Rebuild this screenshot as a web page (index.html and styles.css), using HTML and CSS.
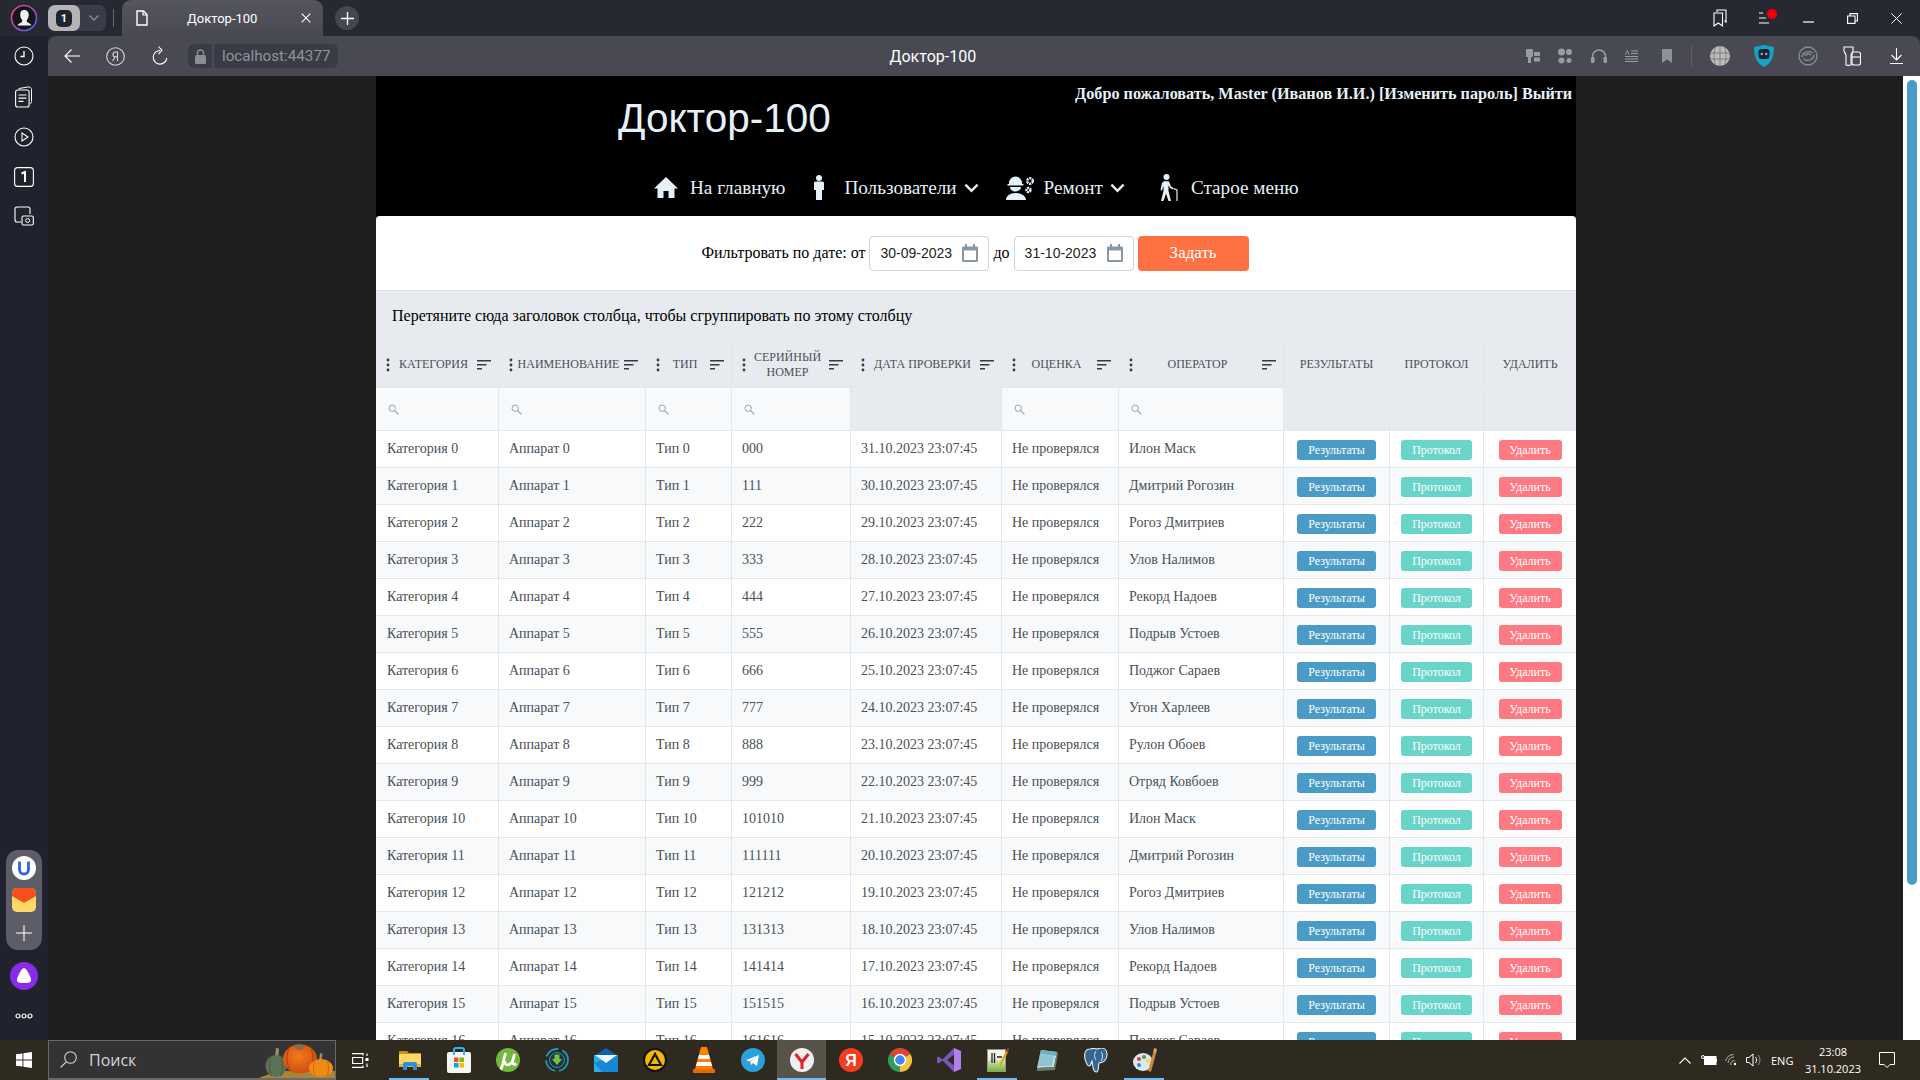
FILE: index.html
```html
<!DOCTYPE html>
<html lang="ru">
<head>
<meta charset="utf-8">
<title>Доктор-100</title>
<link rel="stylesheet" href="styles.css">
</head>
<body>
<svg class="defs" width="0" height="0">
  <defs>
    <symbol id="kebab" viewBox="0 0 4 14"><circle cx="2" cy="2" r="1.4"/><circle cx="2" cy="7" r="1.4"/><circle cx="2" cy="12" r="1.4"/></symbol>
    <symbol id="sort" viewBox="0 0 14 10"><path d="M0 0h14v1.6H0zM0 4h9.5v1.6H0zM0 8h5v1.6H0z"/></symbol>
    <symbol id="find" viewBox="0 0 11 11"><circle cx="4.2" cy="4.2" r="3.2" fill="none" stroke="currentColor"/><path d="M6.6 6.6L10.4 10.4" stroke="currentColor" stroke-width="1.3"/></symbol>
    <symbol id="cal" viewBox="0 0 16 18"><path d="M0 3.5a1 1 0 0 1 1-1h2V0h2v2.5h6V0h2v2.5h2a1 1 0 0 1 1 1V17a1 1 0 0 1-1 1H1a1 1 0 0 1-1-1zM2 6.500V16h12V6.500z"/></symbol>
    <symbol id="chev" viewBox="0 0 16 10"><path d="M1.500 1.500L8 8l6.500-6.500" fill="none" stroke="currentColor" stroke-width="2.600"/></symbol>
  </defs>
</svg>
<div class="screen">
  <header class="titlebar">
    <div class="avatar">
      <svg width="28" height="28" viewBox="0 0 28 28"><defs><linearGradient id="ring" x1="0" y1="0" x2="1" y2="1"><stop offset="0" stop-color="#ff3d78"/><stop offset="1" stop-color="#4a5cff"/></linearGradient></defs><circle cx="14" cy="14" r="12.500" fill="#15161c" stroke="url(#ring)" stroke-width="1.600"/><path d="M14 6c3.400 0 5 2.500 4.700 5.500-.2 2-1 3.500-2 4.500l.3 2 3.500 2c.6.500.7 1.200.7 1.500H7.800c0-.3.100-1 .7-1.500l3.500-2 .3-2c-1-1-1.800-2.500-2-4.500C10 8.500 11 6 14 6z" fill="#f1f1f1"/></svg>
    </div>
    <div class="tabcount">
      <span class="tabcount-on"><b>1</b></span>
      <svg width="12" height="8" viewBox="0 0 12 8"><path d="M1.500 1.500L6 6l4.500-4.500" fill="none" stroke="#8a8c95" stroke-width="1.300"/></svg>
    </div>
    <span class="bar-sep"></span>
    <div class="tab">
      <svg width="12" height="16" viewBox="0 0 12 16"><path d="M1 1h6.500L11 4.500V15H1z" fill="none" stroke="#fff" stroke-width="1.400"/><path d="M7 1v4h4" fill="none" stroke="#fff" stroke-width="1.200"/></svg>
      <span class="tab-title">Доктор-100</span>
      <svg width="10" height="10" viewBox="0 0 10 10"><path d="M.7.7l8.600 8.600M9.300.7L.7 9.300" stroke="#fff" stroke-width="1.100"/></svg>
    </div>
    <div class="newtab"><svg width="13" height="13" viewBox="0 0 13 13"><path d="M6.500 0v13M0 6.500h13" stroke="#fff" stroke-width="1.300"/></svg></div>
    <div class="window-btns">
      <span class="win-btn"><svg width="14" height="18" viewBox="0 0 14 18"><path d="M4 3V1h9v12l-1.500-1.200M1 4h8.500v13L5.300 14 1 17z" fill="none" stroke="#fff" stroke-width="1.100"/></svg></span>
      <span class="win-btn win-menu"><svg width="10" height="12" viewBox="0 0 10 12"><path d="M0 1h4M0 6h7M0 11h10" stroke="#fff" stroke-width="1.100"/></svg><i class="red-dot"></i></span>
      <span class="win-btn win-min"><svg width="11" height="2" viewBox="0 0 11 2"><path d="M0 1h11" stroke="#fff" stroke-width="1.200"/></svg></span>
      <span class="win-btn"><svg width="11" height="11" viewBox="0 0 11 11"><path d="M3 3V.6h7.400V8H8M.6 3h7.400v7.400H.6z" fill="none" stroke="#fff" stroke-width="1.100"/></svg></span>
      <span class="win-btn"><svg width="11" height="11" viewBox="0 0 11 11"><path d="M.4.4l10.200 10.200M10.600.4L.4 10.600" stroke="#fff" stroke-width="1"/></svg></span>
    </div>
  </header>

  <aside class="sidebar">
    <div class="side-top">
      <svg width="20" height="20" viewBox="0 0 20 20"><circle cx="10" cy="10" r="9" fill="none" stroke="#fff" stroke-width="1.100"/><path d="M10 5v5.500H6.500" fill="none" stroke="#fff" stroke-width="1.300"/></svg>
      <svg width="18" height="22" viewBox="0 0 18 22"><rect x=".6" y="4" width="13.500" height="17" rx="2" fill="none" stroke="#fff" stroke-width="1.100"/><path d="M4 3.500V2.500l9-1.500c2-.2 3.500.6 3.500 2.500v12c0 1.200-.6 2-1.500 2.500" fill="none" stroke="#fff"/><path d="M3.500 9h8M3.500 12.200h8M3.500 15.400h5" stroke="#fff" stroke-width="1.200"/></svg>
      <svg width="20" height="20" viewBox="0 0 20 20"><circle cx="10" cy="10" r="9" fill="none" stroke="#fff" stroke-width="1.100"/><path d="M8 6l6 4-6 4z" fill="none" stroke="#fff" stroke-width="1.100"/></svg>
      <svg width="20" height="20" viewBox="0 0 20 20"><rect x=".6" y=".6" width="18.800" height="18.800" rx="3" fill="none" stroke="#fff" stroke-width="1.100"/><path d="M7.500 6.500L11 5v10" fill="none" stroke="#fff" stroke-width="2"/></svg>
      <svg width="20" height="20" viewBox="0 0 20 20"><path d="M7 16H3a2 2 0 0 1-2-2V3a2 2 0 0 1 2-2h11a2 2 0 0 1 2 2v5" fill="none" stroke="#fff" stroke-width="1.100"/><rect x="8" y="10" width="11.300" height="9" rx="1.500" fill="#20232e" stroke="#fff" stroke-width="1.100"/><circle cx="13.700" cy="14.500" r="2" fill="none" stroke="#fff"/></svg>
    </div>
    <div class="side-bottom">
      <div class="side-group">
        <svg width="24" height="24" viewBox="0 0 24 24"><circle cx="12" cy="12" r="12" fill="#fff"/><path d="M7.500 5.500v8a4.500 4.500 0 0 0 9 0v-8" fill="none" stroke="#2f62e8" stroke-width="2.800"/></svg>
        <svg width="24" height="24" viewBox="0 0 24 24"><rect width="24" height="24" rx="5" fill="#ffd76a"/><path d="M0 5a5 5 0 0 1 5-5h14a5 5 0 0 1 5 5v3l-12 7L0 8z" fill="#f4511e"/></svg>
        <svg width="16" height="16" viewBox="0 0 16 16"><path d="M8 0v16M0 8h16" stroke="#fff" stroke-width="1.100"/></svg>
      </div>
      <svg class="alice" width="28" height="28" viewBox="0 0 28 28"><circle cx="14" cy="14" r="14" fill="#8a2be8"/><path d="M14 6c2.500 0 7 9 7 12 0 2.500-3 3-7 3s-7-.5-7-3c0-3 4.500-12 7-12z" fill="#fff"/></svg>
      <svg class="dots" width="18" height="6" viewBox="0 0 18 6"><g fill="none" stroke="#fff" stroke-width="1.200"><circle cx="3" cy="3" r="2"/><circle cx="9" cy="3" r="2"/><circle cx="15" cy="3" r="2"/></g></svg>
    </div>
  </aside>

  <nav class="toolbar">
    <div class="tool-left">
      <svg class="t-back" width="16" height="14" viewBox="0 0 16 14"><path d="M7.500.5L1 7l6.500 6.500M1 7h15" fill="none" stroke="#fff" stroke-width="1.100"/></svg>
      <svg class="t-ya" width="19" height="19" viewBox="0 0 19 19"><circle cx="9.500" cy="9.500" r="8.800" fill="none" stroke="#d8d8dc" stroke-width="1.100"/><path d="M11.500 14V5H9.400C7.800 5 7 6 7 7.400s.8 2.400 2.300 2.400h2.200M9 10l-2.300 4" fill="none" stroke="#d8d8dc" stroke-width="1.100"/></svg>
      <svg class="t-re" width="16" height="20" viewBox="0 0 16 20"><path d="M8 4.500a6.800 6.800 0 1 0 6.800 7.500" fill="none" stroke="#fff" stroke-width="1.100"/><path d="M6.500.5L10 4.300 6.500 8" fill="none" stroke="#fff" stroke-width="1.100"/></svg>
      <span class="lock-chip"><svg width="11" height="15" viewBox="0 0 11 15"><path d="M2.500 6V4a3 3 0 0 1 6 0v2" fill="none" stroke="#8a8d96" stroke-width="1.400"/><rect y="6" width="11" height="9" rx="1.500" fill="#8a8d96"/></svg></span>
      <span class="url-chip">localhost:44377</span>
    </div>
    <div class="page-title">Доктор-100</div>
    <div class="tool-right">
      <svg width="14" height="14" viewBox="0 0 14 14" fill="#9a9ca3"><rect width="7" height="8" rx="1"/><rect x="2" y="8" width="3" height="6"/><rect x="8" y="3" width="6" height="4"/><rect x="8" y="8.500" width="6" height="4"/></svg>
      <svg width="14" height="16" viewBox="0 0 14 16" fill="#9a9ca3"><circle cx="3.500" cy="4" r="3.500"/><circle cx="11" cy="4" r="3"/><circle cx="3.500" cy="12.500" r="3"/><circle cx="11" cy="12.500" r="2.500"/></svg>
      <svg width="16" height="14" viewBox="0 0 16 14"><path d="M1.500 11V7.500a6.500 6.500 0 0 1 13 0V11" fill="none" stroke="#9a9ca3" stroke-width="1.500"/><rect y="8" width="3.500" height="6" rx="1" fill="#9a9ca3"/><rect x="12.500" y="8" width="3.500" height="6" rx="1" fill="#9a9ca3"/></svg>
      <svg width="13" height="13" viewBox="0 0 13 13"><path d="M6 1h7M6 3.500h7M0 6.500h13M0 9h13M0 11.500h13" stroke="#9a9ca3"/><path d="M.5 4.500L2.300.5l1.800 4" fill="none" stroke="#9a9ca3"/></svg>
      <svg width="10" height="14" viewBox="0 0 10 14"><path d="M0 0h10v14L5 10.500 0 14z" fill="#8f9198"/></svg>
      <span class="tool-sep"></span>
      <svg width="20" height="20" viewBox="0 0 20 20"><circle cx="10" cy="10" r="10" fill="#bcbcbc"/><path d="M0 7h20M0 13h20M10 0v20M5.500 1.500c-2 5-2 12 0 17M14.500 1.500c2 5 2 12 0 17" fill="none" stroke="#6d6d6d" stroke-width=".8"/></svg>
      <svg width="20" height="22" viewBox="0 0 20 22"><path d="M0 2l10-2 10 2c0 9-2 16-10 20C2 18 0 11 0 2z" fill="#14a3c7"/><rect x="4.500" y="4" width="11" height="10" rx="3" fill="#1b2430"/><circle cx="7.800" cy="9" r="1.200" fill="#7fb7c9"/><circle cx="12.200" cy="9" r="1.200" fill="#7fb7c9"/></svg>
      <svg width="20" height="20" viewBox="0 0 20 20" fill="none" stroke="#8c8e95" stroke-width="1.300"><circle cx="10" cy="10" r="9"/><path d="M4 11c1-5 7-7 11-4M16 9c-1 5-7 7-10 4M7 10c1-2 4-3 6-1"/></svg>
      <svg width="18" height="20" viewBox="0 0 18 20" fill="none" stroke="#fff" stroke-width="1.100"><path d="M3 19V9L1 5V1h9v4L8 9v10c-2 .5-3.500.5-5 0z"/><rect x="9" y="6" width="8.500" height="13" rx="2"/><path d="M9 11h8.500"/></svg>
      <svg width="13" height="16" viewBox="0 0 13 16"><path d="M6.500 0v12M1.500 7l5 5 5-5M0 15.500h13" fill="none" stroke="#fff" stroke-width="1.100"/></svg>
    </div>
  </nav>

  <main class="viewport">
    <div class="page">
      <section class="site-head">
        <div class="head-top">
          <h1 class="brand">Доктор-100</h1>
          <p class="welcome">Добро пожаловать, Master (Иванов И.И.) [Изменить пароль] Выйти</p>
        </div>
        <ul class="menu">
          <li class="m-home"><svg width="24" height="21" viewBox="0 0 24 21"><path d="M12 0L0 11.500h3.500V21h6v-7h5v7h6v-9.500H24z" fill="#e6f0f8"/></svg>На главную</li>
          <li class="m-users"><svg width="12" height="25" viewBox="0 0 12 25"><circle cx="6" cy="3" r="3" fill="#e6f0f8"/><path d="M1 8a1.500 1.500 0 0 1 1.500-1.500h7A1.500 1.500 0 0 1 11 8v7H9v10H3V15H1z" fill="#e6f0f8"/></svg>Пользователи<svg class="chev" width="15" height="10"><use href="#chev"/></svg></li>
          <li class="m-rep"><svg width="29" height="24" viewBox="0 0 29 24"><path d="M3 7a6.500 6.500 0 0 1 13 0v1h1.500v1.500h-16V8H3zM4 11h11c0 2.500-2.500 4.500-5.500 4.500S4 13.500 4 11zM0 24c0-4 4-7 9.500-7S20 20 20 24z" fill="#e6f0f8"/><g fill="none" stroke="#e6f0f8" stroke-width="2.400"><circle cx="24" cy="5" r="2.800" stroke-dasharray="2.200 .8"/><circle cx="22.500" cy="14" r="2" stroke-dasharray="1.800 .6"/></g></svg>Ремонт<svg class="chev" width="15" height="10"><use href="#chev"/></svg></li>
          <li class="m-old"><svg width="20" height="27" viewBox="0 0 20 27"><circle cx="8.500" cy="3" r="3" fill="#e6f0f8"/><path d="M6.500 7L4 9l-1.500 7 1.500.5 1.500-5V17L3 27h2.500L8 19.500 10.500 27H13l-2.500-10v-6l1.500 3 3 1.500.5-1.500-2.500-1.500-2-5z" fill="#e6f0f8"/><path d="M15.500 14.500L19 16v11" fill="none" stroke="#e6f0f8" stroke-width="1.200"/></svg>Старое меню</li>
        </ul>
      </section>

      <section class="filter-card">
        <span>Фильтровать по дате: от</span>
        <span class="date-field"><span>30-09-2023</span><svg class="cal" width="16" height="18"><use href="#cal"/></svg></span>
        <span>до</span>
        <span class="date-field"><span>31-10-2023</span><svg class="cal" width="16" height="18"><use href="#cal"/></svg></span>
        <button class="apply" type="button">Задать</button>
      </section>

      <section class="group-panel">Перетяните сюда заголовок столбца, чтобы сгруппировать по этому столбцу</section>

      <table class="grid">
        <colgroup>
          <col class="c1"><col class="c2"><col class="c3"><col class="c4"><col class="c5"><col class="c6"><col class="c7"><col class="c8"><col class="c9"><col class="c10">
        </colgroup>
        <thead>
          <tr class="head-row">
            <th><div class="hd"><svg class="keb" width="4" height="14"><use href="#kebab"/></svg><span>Категория</span><svg class="srt" width="14" height="10"><use href="#sort"/></svg></div></th>
            <th><div class="hd"><svg class="keb" width="4" height="14"><use href="#kebab"/></svg><span>Наименование</span><svg class="srt" width="14" height="10"><use href="#sort"/></svg></div></th>
            <th><div class="hd"><svg class="keb" width="4" height="14"><use href="#kebab"/></svg><span>Тип</span><svg class="srt" width="14" height="10"><use href="#sort"/></svg></div></th>
            <th><div class="hd"><svg class="keb" width="4" height="14"><use href="#kebab"/></svg><span>Серийный номер</span><svg class="srt" width="14" height="10"><use href="#sort"/></svg></div></th>
            <th><div class="hd"><svg class="keb" width="4" height="14"><use href="#kebab"/></svg><span>Дата проверки</span><svg class="srt" width="14" height="10"><use href="#sort"/></svg></div></th>
            <th><div class="hd"><svg class="keb" width="4" height="14"><use href="#kebab"/></svg><span>Оценка</span><svg class="srt" width="14" height="10"><use href="#sort"/></svg></div></th>
            <th><div class="hd"><svg class="keb" width="4" height="14"><use href="#kebab"/></svg><span>Оператор</span><svg class="srt" width="14" height="10"><use href="#sort"/></svg></div></th>
            <th class="plain">Результаты</th>
            <th class="plain">Протокол</th>
            <th class="plain">Удалить</th>
          </tr>
          <tr class="filter-row">
            <td><svg class="fnd" width="11" height="11"><use href="#find"/></svg></td>
            <td><svg class="fnd" width="11" height="11"><use href="#find"/></svg></td>
            <td><svg class="fnd" width="11" height="11"><use href="#find"/></svg></td>
            <td><svg class="fnd" width="11" height="11"><use href="#find"/></svg></td>
            <td class="nofilter"></td>
            <td><svg class="fnd" width="11" height="11"><use href="#find"/></svg></td>
            <td><svg class="fnd" width="11" height="11"><use href="#find"/></svg></td>
            <td class="nofilter"></td>
            <td class="nofilter"></td>
            <td class="nofilter"></td>
          </tr>
        </thead>
        <tbody>
          <tr><td>Категория 0</td><td>Аппарат 0</td><td>Тип 0</td><td>000</td><td>31.10.2023 23:07:45</td><td>Не проверялся</td><td>Илон Маск</td><td class="act"><a class="btn b-res">Результаты</a></td><td class="act"><a class="btn b-pro">Протокол</a></td><td class="act"><a class="btn b-del">Удалить</a></td></tr>
          <tr><td>Категория 1</td><td>Аппарат 1</td><td>Тип 1</td><td>111</td><td>30.10.2023 23:07:45</td><td>Не проверялся</td><td>Дмитрий Рогозин</td><td class="act"><a class="btn b-res">Результаты</a></td><td class="act"><a class="btn b-pro">Протокол</a></td><td class="act"><a class="btn b-del">Удалить</a></td></tr>
          <tr><td>Категория 2</td><td>Аппарат 2</td><td>Тип 2</td><td>222</td><td>29.10.2023 23:07:45</td><td>Не проверялся</td><td>Рогоз Дмитриев</td><td class="act"><a class="btn b-res">Результаты</a></td><td class="act"><a class="btn b-pro">Протокол</a></td><td class="act"><a class="btn b-del">Удалить</a></td></tr>
          <tr><td>Категория 3</td><td>Аппарат 3</td><td>Тип 3</td><td>333</td><td>28.10.2023 23:07:45</td><td>Не проверялся</td><td>Улов Налимов</td><td class="act"><a class="btn b-res">Результаты</a></td><td class="act"><a class="btn b-pro">Протокол</a></td><td class="act"><a class="btn b-del">Удалить</a></td></tr>
          <tr><td>Категория 4</td><td>Аппарат 4</td><td>Тип 4</td><td>444</td><td>27.10.2023 23:07:45</td><td>Не проверялся</td><td>Рекорд Надоев</td><td class="act"><a class="btn b-res">Результаты</a></td><td class="act"><a class="btn b-pro">Протокол</a></td><td class="act"><a class="btn b-del">Удалить</a></td></tr>
          <tr><td>Категория 5</td><td>Аппарат 5</td><td>Тип 5</td><td>555</td><td>26.10.2023 23:07:45</td><td>Не проверялся</td><td>Подрыв Устоев</td><td class="act"><a class="btn b-res">Результаты</a></td><td class="act"><a class="btn b-pro">Протокол</a></td><td class="act"><a class="btn b-del">Удалить</a></td></tr>
          <tr><td>Категория 6</td><td>Аппарат 6</td><td>Тип 6</td><td>666</td><td>25.10.2023 23:07:45</td><td>Не проверялся</td><td>Поджог Сараев</td><td class="act"><a class="btn b-res">Результаты</a></td><td class="act"><a class="btn b-pro">Протокол</a></td><td class="act"><a class="btn b-del">Удалить</a></td></tr>
          <tr><td>Категория 7</td><td>Аппарат 7</td><td>Тип 7</td><td>777</td><td>24.10.2023 23:07:45</td><td>Не проверялся</td><td>Угон Харлеев</td><td class="act"><a class="btn b-res">Результаты</a></td><td class="act"><a class="btn b-pro">Протокол</a></td><td class="act"><a class="btn b-del">Удалить</a></td></tr>
          <tr><td>Категория 8</td><td>Аппарат 8</td><td>Тип 8</td><td>888</td><td>23.10.2023 23:07:45</td><td>Не проверялся</td><td>Рулон Обоев</td><td class="act"><a class="btn b-res">Результаты</a></td><td class="act"><a class="btn b-pro">Протокол</a></td><td class="act"><a class="btn b-del">Удалить</a></td></tr>
          <tr><td>Категория 9</td><td>Аппарат 9</td><td>Тип 9</td><td>999</td><td>22.10.2023 23:07:45</td><td>Не проверялся</td><td>Отряд Ковбоев</td><td class="act"><a class="btn b-res">Результаты</a></td><td class="act"><a class="btn b-pro">Протокол</a></td><td class="act"><a class="btn b-del">Удалить</a></td></tr>
          <tr><td>Категория 10</td><td>Аппарат 10</td><td>Тип 10</td><td>101010</td><td>21.10.2023 23:07:45</td><td>Не проверялся</td><td>Илон Маск</td><td class="act"><a class="btn b-res">Результаты</a></td><td class="act"><a class="btn b-pro">Протокол</a></td><td class="act"><a class="btn b-del">Удалить</a></td></tr>
          <tr><td>Категория 11</td><td>Аппарат 11</td><td>Тип 11</td><td>111111</td><td>20.10.2023 23:07:45</td><td>Не проверялся</td><td>Дмитрий Рогозин</td><td class="act"><a class="btn b-res">Результаты</a></td><td class="act"><a class="btn b-pro">Протокол</a></td><td class="act"><a class="btn b-del">Удалить</a></td></tr>
          <tr><td>Категория 12</td><td>Аппарат 12</td><td>Тип 12</td><td>121212</td><td>19.10.2023 23:07:45</td><td>Не проверялся</td><td>Рогоз Дмитриев</td><td class="act"><a class="btn b-res">Результаты</a></td><td class="act"><a class="btn b-pro">Протокол</a></td><td class="act"><a class="btn b-del">Удалить</a></td></tr>
          <tr><td>Категория 13</td><td>Аппарат 13</td><td>Тип 13</td><td>131313</td><td>18.10.2023 23:07:45</td><td>Не проверялся</td><td>Улов Налимов</td><td class="act"><a class="btn b-res">Результаты</a></td><td class="act"><a class="btn b-pro">Протокол</a></td><td class="act"><a class="btn b-del">Удалить</a></td></tr>
          <tr><td>Категория 14</td><td>Аппарат 14</td><td>Тип 14</td><td>141414</td><td>17.10.2023 23:07:45</td><td>Не проверялся</td><td>Рекорд Надоев</td><td class="act"><a class="btn b-res">Результаты</a></td><td class="act"><a class="btn b-pro">Протокол</a></td><td class="act"><a class="btn b-del">Удалить</a></td></tr>
          <tr><td>Категория 15</td><td>Аппарат 15</td><td>Тип 15</td><td>151515</td><td>16.10.2023 23:07:45</td><td>Не проверялся</td><td>Подрыв Устоев</td><td class="act"><a class="btn b-res">Результаты</a></td><td class="act"><a class="btn b-pro">Протокол</a></td><td class="act"><a class="btn b-del">Удалить</a></td></tr>
          <tr><td>Категория 16</td><td>Аппарат 16</td><td>Тип 16</td><td>161616</td><td>15.10.2023 23:07:45</td><td>Не проверялся</td><td>Поджог Сараев</td><td class="act"><a class="btn b-res">Результаты</a></td><td class="act"><a class="btn b-pro">Протокол</a></td><td class="act"><a class="btn b-del">Удалить</a></td></tr>
        </tbody>
      </table>
    </div>
    <div class="scrollbar"><div class="thumb"></div></div>
  </main>

  <footer class="taskbar">
    <div class="start"><svg width="16" height="16" viewBox="0 0 16 16" fill="#fff"><path d="M0 2.300L6.500 1.400v6.200H0zM7.400 1.300L16 0v7.600H7.400zM0 8.400h6.500v6.200L0 13.700zM7.400 8.400H16V16l-8.600-1.300z"/></svg></div>
    <div class="search">
      <svg width="17" height="17" viewBox="0 0 17 17"><circle cx="10.500" cy="6.500" r="5.800" fill="none" stroke="#d5d5d5" stroke-width="1.100"/><path d="M6.500 10.700L.6 16.500" stroke="#d5d5d5" stroke-width="1.100"/></svg>
      <span class="search-text">Поиск</span>
      <svg class="pumpkins" width="76" height="38" viewBox="0 0 76 38"><defs><radialGradient id="pk" cx=".45" cy=".4" r=".7"><stop offset="0" stop-color="#f47a1c"/><stop offset="1" stop-color="#c9470b"/></radialGradient></defs><path d="M0 38l18-7h58v7z" fill="#a8843d"/><path d="M16 16l1-8 3 .5-.5 8z" fill="#9c8a70"/><ellipse cx="17" cy="26" rx="10.500" ry="11" fill="#5b7257"/><path d="M12 16c-2 6-2 14 0 20M22 16c2 6 2 14 0 20" fill="none" stroke="#465a44"/><ellipse cx="41" cy="19" rx="17" ry="14.500" fill="url(#pk)"/><path d="M35 5c4-1.500 8-1 10 1s-2 5-6 4c-2-.5-4-3-4-5z" fill="#8a6a4a"/><path d="M31 6c-4 7-4 19 1 26M51 6c4 7 4 19-1 26" fill="none" stroke="#b03f08"/><path d="M60 21l1-8 2.500.5-1 8z" fill="#a08a6c"/><ellipse cx="62" cy="28" rx="12" ry="9" fill="#ee8a18"/><path d="M56 20c-2 5-2 11 0 16M68 20c2 5 2 11 0 16" fill="none" stroke="#c96f10"/></svg>
    </div>
    <div class="task-icons">
      <span class="slot"><svg width="17" height="15" viewBox="0 0 17 15" fill="none" stroke="#fff" stroke-width="1.200"><path d="M0 .6h11v2M0 14.400h11v-2M.6 4.500h10v6H.6z"/><rect x="13.500" y="5" width="3" height="3" fill="#fff" stroke="none"/><path d="M15 .5v2.500M15 10.500v3.500"/></svg></span>
      <span class="slot on"><svg width="22" height="19" viewBox="0 0 22 19"><path d="M0 0h8l2 2h12v4H0z" fill="#c98f1c"/><rect y="3" width="22" height="13" rx="1" fill="#ffd766"/><rect y="13" width="22" height="3" fill="#e6b140"/><path d="M4 19v-6a2 2 0 0 1 2-2h10a2 2 0 0 1 2 2v6h-4v-4H8v4z" fill="#2f8fd8"/></svg></span>
      <span class="slot"><svg width="24" height="26" viewBox="0 0 24 26"><rect y="5" width="24" height="21" rx="2" fill="#f5f5f5"/><path d="M7 8V3A2 2 0 0 1 9 1h6a2 2 0 0 1 2 2v5" fill="none" stroke="#29b6f6" stroke-width="2"/><rect x="7" y="10.500" width="4.500" height="4.500" fill="#f25022"/><rect x="12.500" y="10.500" width="4.500" height="4.500" fill="#7fba00"/><rect x="7" y="16" width="4.500" height="4.500" fill="#00a4ef"/><rect x="12.500" y="16" width="4.500" height="4.500" fill="#ffb900"/></svg></span>
      <span class="slot"><svg width="24" height="24" viewBox="0 0 24 24"><circle cx="12" cy="12" r="12" fill="#76b83f"/><path d="M9.500 5L6.500 17c-.5 2-1 3.500-2 4.500M9 13c-.5 3 1.500 4.500 4 3.500s3.500-2.500 4-4.500l1.500-6M16.500 12c-.5 3 .5 5 4 4" fill="none" stroke="#fff" stroke-width="2.800"/></svg></span>
      <span class="slot"><svg width="24" height="24" viewBox="0 0 24 24"><circle cx="12" cy="12" r="11" fill="none" stroke="#1c9bc4" stroke-width="1.800" stroke-dasharray="15 4"/><circle cx="12" cy="12" r="7.500" fill="#1d3a3a" stroke="#1c9bc4"/><path d="M9.500 6.500h5V11H17l-5 6-5-6h2.500z" fill="#7ec142"/></svg></span>
      <span class="slot"><svg width="24" height="24" viewBox="0 0 24 24"><path d="M12 0l12 8H0z" fill="#0a62b0"/><path d="M0 7h24v17H0z" fill="#29aee8"/><path d="M0 15l24-8v17H8z" fill="#1787d6"/><path d="M1 7h22l-11 8z" fill="#eef8fd"/></svg></span>
      <span class="slot"><svg width="24" height="24" viewBox="0 0 24 24"><circle cx="12" cy="12" r="12" fill="#111"/><circle cx="12" cy="12" r="10" fill="#f5b800"/><path d="M12 6l6 11H6z" fill="none" stroke="#111" stroke-width="2.200"/></svg></span>
      <span class="slot"><svg width="22" height="26" viewBox="0 0 22 26"><path d="M8 0h6l6 22H2z" fill="#ff7f00"/><path d="M6 8h10l1 4H5zM4 15h14l1 4H3z" fill="#fff"/><rect y="22" width="22" height="4" rx="1" fill="#e86a00"/></svg></span>
      <span class="slot"><svg width="24" height="24" viewBox="0 0 24 24"><circle cx="12" cy="12" r="12" fill="#2aa1da"/><path d="M5 12l13-5-2 11-4-3-2 2-.5-3.500L16 9l-7.500 4.500z" fill="#fff"/></svg></span>
      <span class="slot on active"><svg width="24" height="24" viewBox="0 0 24 24"><circle cx="12" cy="12" r="12" fill="#f2f0ee"/><path d="M5.500 6L12 14l6.500-8M12 14v7" fill="none" stroke="#e0202c" stroke-width="3"/></svg></span>
      <span class="slot"><svg width="24" height="24" viewBox="0 0 24 24"><circle cx="12" cy="12" r="12" fill="#f53c1f"/><text class="ya-glyph" x="12" y="18" text-anchor="middle">Я</text></svg></span>
      <span class="slot"><svg width="24" height="24" viewBox="0 0 24 24"><path d="M12 12L1.600 6A12 12 0 0 1 22.400 6z" fill="#db4437"/><path d="M12 12L22.400 6A12 12 0 0 1 12 24z" fill="#f5c33b"/><path d="M12 12L12 24A12 12 0 0 1 1.600 6z" fill="#2f9e52"/><circle cx="12" cy="12" r="5.500" fill="#4285f4" stroke="#fff" stroke-width="1.500"/></svg></span>
      <span class="slot"><svg width="24" height="24" viewBox="0 0 24 24"><path d="M17 0l7 3v18l-7 3z" fill="#b180ea"/><path d="M17 0L5.500 11.500l-4-3L0 9.500v5l1.500 1 4-3L17 24v-6.500L10 12l7-5.500z" fill="#7a55bd"/></svg></span>
      <span class="slot on"><svg width="22" height="24" viewBox="0 0 22 24"><defs><linearGradient id="npp" x1="0" y1="0" x2="0" y2="1"><stop offset=".35" stop-color="#f0f3e6"/><stop offset="1" stop-color="#6fb32e"/></linearGradient></defs><rect x=".5" y="1.500" width="18" height="22" fill="url(#npp)" stroke="#8f9a80"/><path d="M5 5v10M7.500 5v10M10 9h5" stroke="#222" stroke-width="1.300"/><path d="M12 17L19 3l2 1-7 14z" fill="#e8a020"/><path d="M19.500 2L21 0l1 1-1 3z" fill="#d33"/></svg></span>
      <span class="slot"><svg width="24" height="22" viewBox="0 0 24 22"><path d="M6 1l16 2-3 15-17 1z" fill="#bfe0e8"/><path d="M6 1l16 2-.8 4L5 5z" fill="#6fb1c4"/><path d="M2 19l17-1 3-15 1 2-3 16-18 1z" fill="#6f7d5a"/><path d="M5 5l14 2-2 10H3z" fill="#8fc5d3"/></svg></span>
      <span class="slot"><svg width="24" height="25" viewBox="0 0 24 25"><path d="M6 1C1 1 0 6 1 11c1 3 2 7 4 7s2-3 3-5c1 3 0 10 4 11 3 .5 2-6 3-9 3 0 8-2 8-9 0-4-3-6-6-6-2 0-3 1-4 1-2-.5-4-1-7 0z" fill="#336791" stroke="#e8eef2" stroke-width="1.100"/><path d="M12 3c-2 3-2 6 0 9M17 4c2 2 2 6 0 9" fill="none" stroke="#e8eef2"/></svg></span>
      <span class="slot on"><svg width="24" height="26" viewBox="0 0 24 26"><ellipse cx="10" cy="15" rx="10" ry="9" fill="#dfe8ee"/><circle cx="6" cy="12" r="2" fill="#e53935"/><circle cx="11" cy="10" r="2" fill="#43a047"/><circle cx="15" cy="14" r="2" fill="#fdd835"/><circle cx="6" cy="18" r="2" fill="#1e88e5"/><path d="M15 24L20 6l3 .8-5 18z" fill="#c58a3d"/><path d="M20 6l1-5 3 1-1 5z" fill="#d9a066"/></svg></span>
    </div>
    <div class="tray">
      <svg class="tr-chev" width="12" height="7" viewBox="0 0 12 7"><path d="M.5 6.500L6 1l5.500 5.500" fill="none" stroke="#fff" stroke-width="1.100"/></svg>
      <svg class="tr-bat" width="16" height="12" viewBox="0 0 16 12"><rect x="3.500" y="2.500" width="11.500" height="8" fill="#fff" stroke="#fff"/><circle cx="2" cy="3" r="1.500" fill="none" stroke="#fff"/><rect x="15" y="5" width="1" height="3" fill="#fff"/></svg>
      <svg class="tr-wifi" width="14" height="12" viewBox="0 0 14 12" fill="none" stroke="#b5b5b5"><path d="M.5 7a9 9 0 0 1 8-6.500M3 9a6 6 0 0 1 6-6M6 11a3 3 0 0 1 4-4"/><circle cx="10" cy="10" r="1.200" fill="#fff" stroke="none"/></svg>
      <svg class="tr-vol" width="16" height="14" viewBox="0 0 16 14" fill="none" stroke="#fff"><path d="M.5 4.500h2.500L7 1v12L3 9.500H.5z"/><path d="M9.500 4c1.500 2 1.500 4 0 6"/><path d="M12 2c2.500 3 2.500 7 0 10" stroke="#999"/></svg>
      <span class="lang">ENG</span>
      <div class="clock"><span>23:08</span><span>31.10.2023</span></div>
      <svg class="notif" width="16" height="16" viewBox="0 0 16 16"><path d="M.5.500h15v12H11l-3 3-3-3H.5z" fill="none" stroke="#fff"/></svg>
    </div>
  </footer>
</div>
</body>
</html>
```

FILE: styles.css
```css
* { box-sizing: border-box; }
html, body { margin: 0; height: 100%; overflow: hidden; }
body { font-family: "Liberation Serif", serif; background: #1e1e1e; }
.defs { display: block; height: 0; }

.screen {
  display: grid;
  grid-template-columns: 48px 1fr;
  grid-template-rows: 36px 40px 964px 40px;
  width: 1920px;
  height: 1080px;
  background: #262832;
}

/* title bar */
.titlebar {
  grid-column: 1 / 3;
  display: flex;
  align-items: center;
  background: #262832;
  padding-left: 10px;
}
.avatar { width: 28px; height: 28px; margin-right: 10px; }
.tabcount {
  display: flex;
  align-items: center;
  width: 58px;
  height: 26px;
  border-radius: 7px;
  background: #3a3c47;
  color: #fff;
}
.tabcount svg { margin-left: 8px; }
.tabcount-on {
  display: flex;
  align-items: center;
  justify-content: center;
  width: 32px;
  height: 26px;
  border-radius: 7px;
  background: #b4b4b6;
}
.tabcount-on b {
  display: block;
  width: 16px;
  height: 17px;
  border-radius: 5px;
  background: #22242d;
  font: 700 11px/17px "Roboto", sans-serif;
  text-align: center;
}
.bar-sep { width: 1px; height: 18px; margin: 0 8px 0 7px; background: #64656d; }
.tab {
  display: flex;
  align-items: center;
  width: 201px;
  height: 36px;
  padding: 0 12px 0 14px;
  border-radius: 9px 9px 0 0;
  background: linear-gradient(#55555f, #484953);
  color: #fff;
}
.tab-title {
  flex: 1;
  margin-left: 39px;
  font: 13px "Roboto", sans-serif;
}
.newtab {
  display: flex;
  align-items: center;
  justify-content: center;
  width: 24px;
  height: 24px;
  margin-left: 12px;
  border-radius: 50%;
  background: #454650;
}
.window-btns { display: flex; margin-left: auto; padding-right: 2px; }
.win-btn {
  position: relative;
  display: flex;
  align-items: center;
  justify-content: center;
  width: 44px;
  height: 36px;
}
.win-min svg { margin-top: 8px; }
.win-menu svg { margin-top: -1px; }
.red-dot {
  position: absolute;
  left: 25px;
  top: 9px;
  width: 10px;
  height: 10px;
  border-radius: 50%;
  background: #f40000;
}

/* sidebar */
.sidebar {
  grid-column: 1;
  grid-row: 2 / 4;
  display: flex;
  flex-direction: column;
  justify-content: space-between;
  background: #20232e;
}
.side-top {
  display: flex;
  flex-direction: column;
  align-items: center;
  gap: 19.5px;
  padding-top: 10px;
}
.side-bottom {
  display: flex;
  flex-direction: column;
  align-items: center;
  padding-bottom: 21px;
}
.side-group {
  display: flex;
  flex-direction: column;
  align-items: center;
  gap: 8px;
  width: 36px;
  height: 100px;
  padding-top: 6px;
  border-radius: 12px;
  background: #5c5d66;
}
.side-group svg:last-child { margin-top: 5px; }
.alice { margin-top: 12px; }
.dots { margin-top: 23px; }

/* address bar */
.toolbar {
  position: relative;
  display: flex;
  align-items: center;
  border-radius: 8px 8px 0 0;
  background: #484953;
}
.tool-left { display: flex; align-items: center; }
.t-back { margin-left: 16px; }
.t-ya { margin-left: 26px; }
.t-re { margin-left: 27px; }
.lock-chip {
  display: flex;
  align-items: center;
  justify-content: center;
  width: 24px;
  height: 24px;
  margin-left: 20px;
  border-radius: 6px 3px 3px 6px;
  background: #393b45;
}
.url-chip {
  height: 24px;
  margin-left: 2px;
  padding: 0 8px;
  border-radius: 3px 6px 6px 3px;
  background: #393b45;
  color: #92949b;
  font: 15.2px/24px "Roboto", sans-serif;
}
.page-title {
  margin-left: 551px;
  color: #fff;
  font: 16px "Roboto", sans-serif;
}
.tool-right {
  display: grid;
  grid-template-columns: 32px 32px 36px 28px 44px 9px 44px 44px 44px 44px 44px;
  align-items: center;
  justify-items: center;
  margin-left: auto;
  padding-right: 2px;
}
.tool-sep { justify-self: start; width: 1px; height: 20px; margin-left: 2px; background: #5c5d66; }

/* page */
.viewport {
  display: flex;
  overflow: hidden;
  background: #1e1e1e;
}
.page {
  flex: none;
  width: 1200px;
  margin-left: 328px;
  margin-right: 327px;
}
.scrollbar {
  flex: none;
  width: 17px;
  padding: 4px 3px 0 4px;
  background: #fff;
}
.thumb {
  height: 805px;
  border-radius: 5px;
  background: #4a9cc7;
}

.site-head {
  height: 140px;
  background: #000;
  color: #e6f0f8;
}
.head-top { display: flex; justify-content: space-between; height: 85px; }
.brand {
  margin: 19px 0 0 242px;
  font: 400 40.5px/46px "Liberation Sans", sans-serif;
}
.welcome {
  margin: 9px 4px 0 0;
  font-size: 16.2px;
  font-weight: 700;
  line-height: 18px;
}
.menu {
  display: flex;
  align-items: center;
  height: 53px;
  margin: 0;
  padding: 0 0 0 278px;
  list-style: none;
  font-size: 19.2px;
}
.menu li { display: flex; align-items: center; }
.m-home svg { margin-right: 12px; }
.m-users { margin-left: 28px; }
.m-users > svg:first-child { margin-right: 19px; }
.m-rep { margin-left: 27px; }
.m-rep > svg:first-child { margin-right: 9px; }
.m-old { margin-left: 33px; }
.m-old svg { margin-right: 13px; }
.chev { margin-left: 7px; color: #e6f0f8; }

.filter-card {
  display: flex;
  align-items: center;
  justify-content: center;
  gap: 4px;
  height: 75px;
  padding-right: 2px;
  border-radius: 4px 4px 0 0;
  border-bottom: 1px solid #dee2e6;
  background: #fff;
  color: #000;
  font-size: 16px;
}
.date-field {
  display: flex;
  align-items: center;
  justify-content: space-between;
  width: 120px;
  height: 35px;
  padding: 0 10px;
  border: 1px solid #ced4da;
  border-radius: 4px;
  color: #212529;
  font: 14px "Liberation Sans", sans-serif;
}
.cal { fill: #8799a0; }
.apply {
  width: 111px;
  height: 35px;
  padding: 0;
  border: 0;
  border-radius: 4px;
  background: #ff7043;
  color: #fff;
  font: 17px "Liberation Serif", serif;
}

.group-panel {
  height: 50px;
  padding: 15px 16px 0;
  background: #e7ebef;
  color: #000;
  font-size: 16px;
  line-height: 20px;
}

.grid {
  width: 1200px;
  border-collapse: separate;
  border-spacing: 0;
  table-layout: fixed;
  color: #495057;
  font-size: 14px;
}
.c1 { width: 123px; }
.c2 { width: 147px; }
.c3 { width: 86px; }
.c4 { width: 119px; }
.c5 { width: 151px; }
.c6 { width: 117px; }
.c7 { width: 165px; }
.c8 { width: 106px; }
.c9 { width: 94px; }
.c10 { width: 92px; }

.grid th, .grid td {
  padding: 0;
  border-right: 1px solid #e1e7ea;
  border-bottom: 1px solid #e1e7ea;
}
.grid tr > :last-child { border-right: 0; }

.head-row th {
  height: 47px;
  background: #e7ebef;
  border-top: 1px solid #e1e7ea;
  font-size: 12px;
  font-weight: 400;
  line-height: 15px;
  text-transform: uppercase;
}
.hd {
  display: flex;
  align-items: center;
  padding: 0 7px 0 10px;
}
.hd span { flex: 1; padding: 0 2px; text-align: center; }
.keb { flex: none; fill: #333a40; }
.srt { flex: none; fill: #333a40; }

.grid .filter-row td {
  height: 43px;
  padding: 0 0 0 12px;
  background: #f7f9fb;
}
.grid .filter-row .nofilter { background: #e7ebef; border-bottom: 0; }
.fnd { display: block; color: #9aa5ad; }

.grid tbody td {
  height: 37px;
  padding: 0 10px;
  background: #fff;
}
.grid tbody td:first-child { padding-left: 11px; }
.grid tbody tr:nth-child(even) td { background: #f7f9fb; }
.grid tbody td.act { padding: 2px 0 0; text-align: center; }

.btn {
  display: inline-block;
  height: 20px;
  border-radius: 3px;
  color: #fff;
  font-size: 12px;
  line-height: 21px;
  text-align: center;
  vertical-align: middle;
}
.b-res { width: 79px; background: #4a9cc7; }
.b-pro { width: 71px; background: #69d5c8; }
.b-del { width: 63px; background: #fd7a82; }

/* taskbar */
.taskbar {
  grid-column: 1 / 3;
  position: relative;
  z-index: 1;
  display: flex;
  align-items: center;
  height: 40px;
  background: #2f2a1f;
  color: #fff;
}
.start {
  display: flex;
  align-items: center;
  justify-content: center;
  width: 48px;
  height: 40px;
}
.search {
  position: relative;
  display: flex;
  align-items: center;
  width: 288px;
  height: 40px;
  padding-left: 11px;
  border: 1px solid #6a6a68;
  border-bottom-width: 2px;
  background: #333;
  overflow: hidden;
}
.search-text {
  margin-left: 12px;
  color: #d5d5d5;
  font: 16px "Open Sans", sans-serif;
}
.pumpkins { position: absolute; right: 0; bottom: 0; }
.task-icons { display: flex; }
.slot {
  position: relative;
  display: flex;
  align-items: center;
  justify-content: center;
  width: 49px;
  height: 40px;
}
.slot.active { background: #575348; }
.slot.on::after {
  content: "";
  position: absolute;
  left: 4px;
  right: 5px;
  bottom: 0;
  height: 2px;
  background: #76b9ed;
}
.slot.active::after { left: 0; right: 0; }
.ya-glyph { fill: #fff; font: 700 16px "Liberation Sans", sans-serif; }

.tray {
  display: flex;
  align-items: center;
  margin-left: auto;
  height: 40px;
}
.tr-bat { margin-left: 10px; }
.tr-wifi { margin-left: 8px; }
.tr-vol { margin-left: 7px; }
.lang {
  margin-left: 9px;
  font: 11px "Open Sans", sans-serif;
}
.clock {
  display: flex;
  flex-direction: column;
  align-items: center;
  gap: 3px;
  margin-left: 11.5px;
  font: 11px/14px "Open Sans", sans-serif;
}
.notif { margin: 0 25px 0 18px; }
```
